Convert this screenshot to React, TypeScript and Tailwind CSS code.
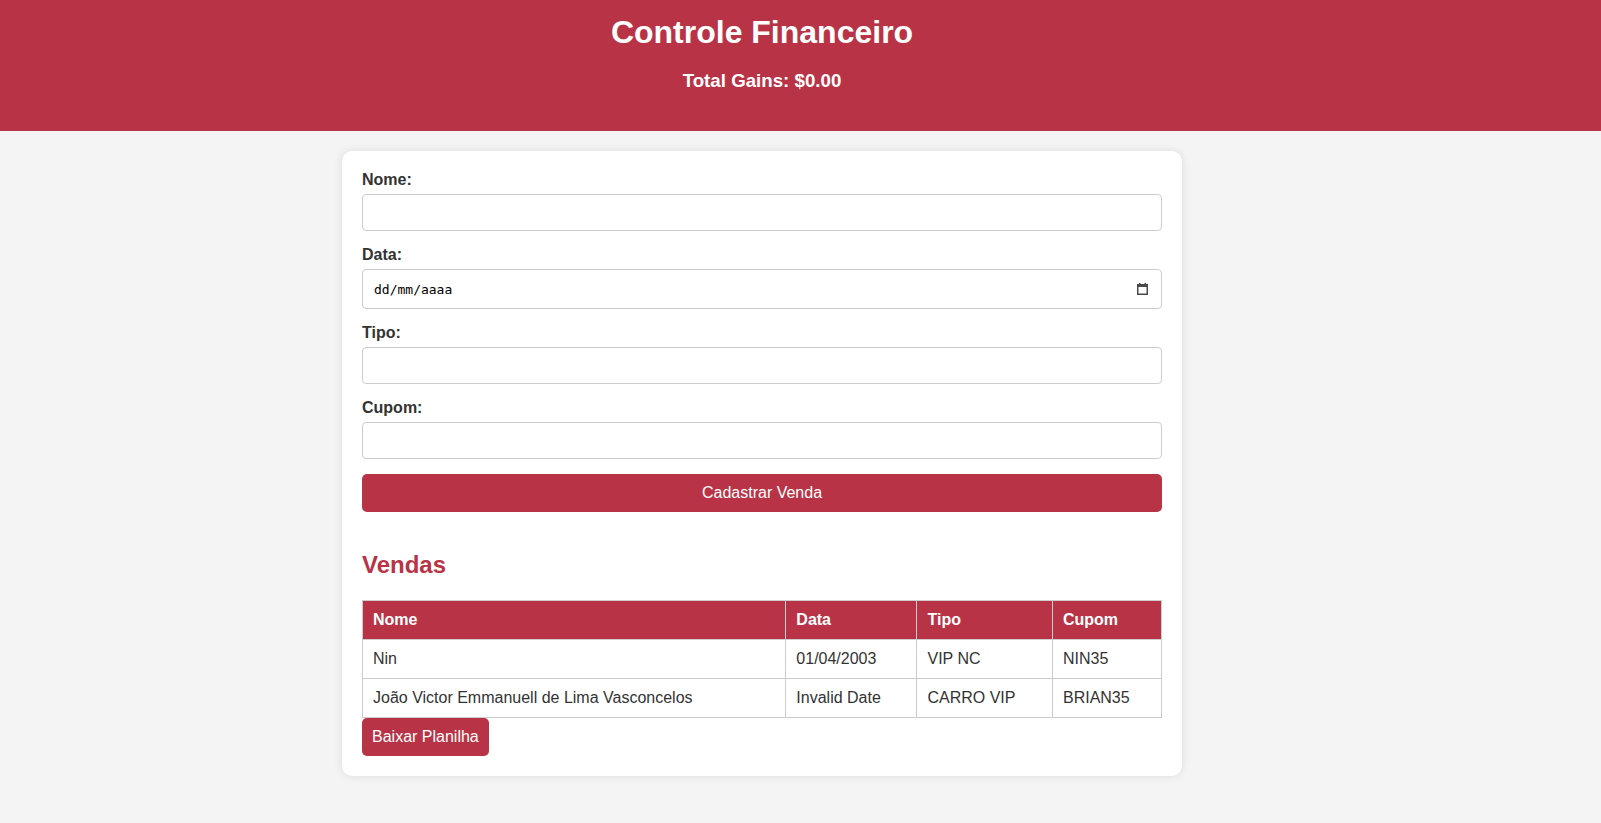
import React from "react";

interface Venda {
  nome: string;
  data: string;
  tipo: string;
  cupom: string;
}

const vendas: Venda[] = [
  { nome: "Nin", data: "01/04/2003", tipo: "VIP NC", cupom: "NIN35" },
  {
    nome: "João Victor Emmanuell de Lima Vasconcelos",
    data: "Invalid Date",
    tipo: "CARRO VIP",
    cupom: "BRIAN35",
  },
];

function Field({ label, children }: { label: string; children: React.ReactNode }) {
  return (
    <div className="mb-[15px]">
      <label className="block mb-[5px] text-[16px] leading-[normal] font-bold text-[#333]">
        {label}
      </label>
      {children}
    </div>
  );
}

function TextInput() {
  return (
    <input
      type="text"
      className="block w-full h-[37px] px-[10px] border border-[#ccc] rounded-[4px] bg-white text-[16px] outline-none"
    />
  );
}

export default function App() {
  return (
    <div className="min-h-[823px] bg-[#f4f4f4] font-['Liberation_Sans',Arial,sans-serif] text-[#333]">
      {/* Header */}
      <header className="h-[131px] bg-[#b83346] text-white">
        <div className="w-[1524px] pt-4 text-center">
          <h1 className="text-[32px] leading-none font-bold">Controle Financeiro</h1>
          <h3 className="mt-[23.5px] text-[18.72px] leading-none font-bold">Total Gains: $0.00</h3>
        </div>
      </header>

      <div className="w-[1524px] pt-[20px] pb-[47px]">
        <div className="mx-auto w-[840px] p-[20px] bg-white rounded-[10px] shadow-[0_0_10px_rgba(0,0,0,0.1)]">
          <form onSubmit={(e) => e.preventDefault()}>
            <Field label="Nome:">
              <TextInput />
            </Field>
            <Field label="Data:">
              <div className="flex items-center justify-between w-full h-[40px] pl-[11px] pr-[13px] border border-[#ccc] rounded-[4px] bg-white">
                <span className="font-['DejaVu_Sans_Mono',monospace] text-[13px] leading-none text-black">
                  dd/mm/aaaa
                </span>
                <svg width="11" height="12" viewBox="0 0 11 12">
                  <rect x="0.75" y="1.75" width="9.5" height="9.5" fill="none" stroke="#4a4a4a" strokeWidth="1.5" />
                  <rect x="0" y="1" width="11" height="3" fill="#4a4a4a" />
                  <rect x="2" y="0" width="1.5" height="2" fill="#4a4a4a" />
                  <rect x="7.5" y="0" width="1.5" height="2" fill="#4a4a4a" />
                </svg>
              </div>
            </Field>
            <Field label="Tipo:">
              <TextInput />
            </Field>
            <Field label="Cupom:">
              <TextInput />
            </Field>
            <button
              type="submit"
              className="block w-full h-[38px] mt-[15px] bg-[#b83346] text-white text-[16px] leading-[18px] rounded-[5px]"
            >
              Cadastrar Venda
            </button>
          </form>

          <h2 className="mt-[39px] mb-[21px] text-[24px] leading-[normal] font-bold text-[#b83346]">Vendas</h2>

          <table className="w-full border-collapse text-[16px] leading-[18px]">
            <thead>
              <tr>
                <th className="p-[10px] text-left font-bold text-white bg-[#b83346] border border-[#ccc]">Nome</th>
                <th className="p-[10px] text-left font-bold text-white bg-[#b83346] border border-[#ccc]">Data</th>
                <th className="p-[10px] text-left font-bold text-white bg-[#b83346] border border-[#ccc]">Tipo</th>
                <th className="p-[10px] text-left font-bold text-white bg-[#b83346] border border-[#ccc]">Cupom</th>
              </tr>
            </thead>
            <tbody>
              {vendas.map((v, i) => (
                <tr key={i}>
                  <td className="p-[10px] border border-[#ccc] whitespace-nowrap">{v.nome}</td>
                  <td className="p-[10px] border border-[#ccc] whitespace-nowrap">{v.data}</td>
                  <td className="p-[10px] border border-[#ccc] whitespace-nowrap">{v.tipo}</td>
                  <td className="p-[10px] border border-[#ccc] whitespace-nowrap">{v.cupom}</td>
                </tr>
              ))}
            </tbody>
          </table>

          <button className="block h-[38px] px-[10px] bg-[#b83346] text-white text-[16px] leading-[18px] rounded-[5px]">
            Baixar Planilha
          </button>
        </div>
      </div>
    </div>
  );
}
